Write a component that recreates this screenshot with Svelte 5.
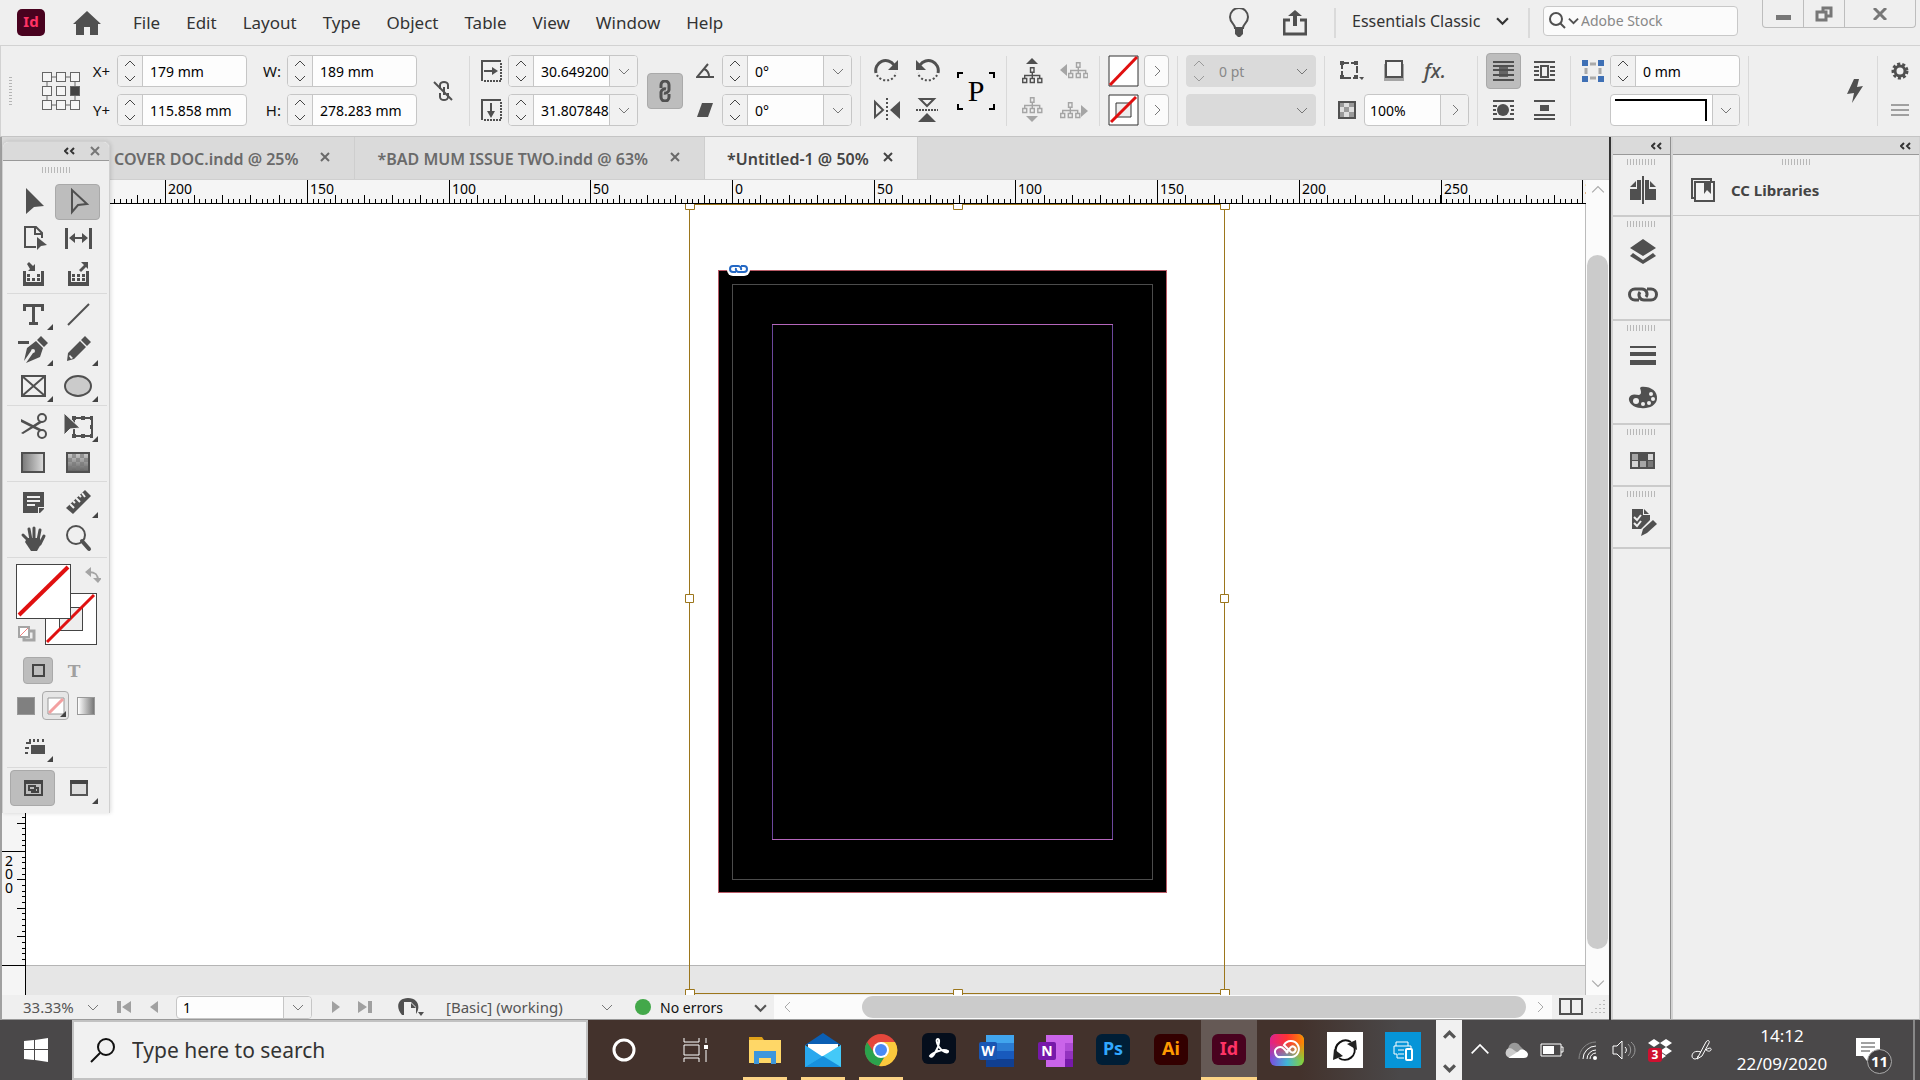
<script lang="ts">
	type Tool = { name: string; art: string; more?: boolean; active?: boolean };

	const menus = ['File', 'Edit', 'Layout', 'Type', 'Object', 'Table', 'View', 'Window', 'Help'];

	const tabs = [
		{ name: 'COVER DOC.indd @ 25%', active: false },
		{ name: '*BAD MUM ISSUE TWO.indd @ 63%', active: false },
		{ name: '*Untitled-1 @ 50%', active: true }
	];

	const ink = '#505050';

	const toolGroups: Tool[][] = [
		[
			{ name: 'Selection', art: `<path d="M8 1v26l8-7 10-1z" fill="${ink}"/>` },
			{
				name: 'Direct selection',
				active: true,
				art: `<path d="M9 3v22l6-7 9-1z" fill="none" stroke="${ink}" stroke-width="2"/>`
			},
			{
				name: 'Page',
				art: `<path d="M18 24H7V4h11l6 6v5M17 4v7h7" fill="none" stroke="${ink}" stroke-width="2"/><path d="M19 14v13l4-4 6-1z" fill="${ink}"/>`
			},
			{
				name: 'Gap',
				art: `<path d="M2 5h3v21H2zM26 5h3v21h-3zM6 15l6-5v4h7v-4l6 5-6 5v-4h-7v4z" fill="${ink}"/>`
			},
			{
				name: 'Content collector',
				art: `<path d="M5 12h3v11h15V12h3v15H5zM9 15h3v3H9zM19 15h3v3h-3zM9 19h3v3H9zM14 19h3v3h-3zM19 19h3v3h-3zM9 5l2-2 4 4 2-2v7h-7l2-2z" fill="${ink}"/>`
			},
			{
				name: 'Content placer',
				art: `<path d="M5 12h3v11h15V12h3v15H5zM9 15h3v3H9zM14 15h3v3h-3zM19 15h3v3h-3zM9 19h3v3H9zM14 19h3v3h-3zM19 19h3v3h-3zM18 3h7v7l-2-2-5 5-2-2 5-5z" fill="${ink}"/>`
			}
		],
		[
			{
				name: 'Type',
				more: true,
				art: `<path d="M5 5h21v7h-3V8h-6v15h3v3h-9v-3h3V8H8v4H5z" fill="${ink}"/>`
			},
			{ name: 'Line', art: `<path d="M5 26L26 5" stroke="${ink}" stroke-width="2"/>` },
			{
				name: 'Delete anchor point',
				more: true,
				art: `<path d="M0 6h11v3H0zM23 1l7 7-4 4-7-7zM18 6l7 7-3 9-14 6 7-10a2 2 0 1 0-2-2L6 26l3-13z" fill="${ink}"/>`
			},
			{
				name: 'Pencil',
				more: true,
				art: `<path d="M22 1l6 6-4 4-6-6zM17 6l6 6L11 24l-7 2 1-8zM6 21l2 3 2-1-3-3z" fill-rule="evenodd" fill="${ink}"/>`
			},
			{
				name: 'Rectangle frame',
				more: true,
				art: `<path d="M4 5h23v20H4zM4 5l23 20M27 5L4 25" fill="none" stroke="${ink}" stroke-width="2"/>`
			},
			{
				name: 'Ellipse',
				more: true,
				art: `<ellipse cx="15" cy="15" rx="13" ry="10" fill="#cbcbcb" stroke="${ink}" stroke-width="2"/>`
			}
		],
		[
			{
				name: 'Scissors',
				art: `<path d="M3 8l22 11-2 2L3 11zM3 22L23 9l2 2L5 23z" fill="${ink}"/><circle cx="24" cy="7" r="4" fill="#efefef" stroke="${ink}" stroke-width="2"/><circle cx="24" cy="23" r="4" fill="#efefef" stroke="${ink}" stroke-width="2"/>`
			},
			{
				name: 'Free transform',
				more: true,
				art: `<path d="M11 7h18v18H11z" fill="none" stroke="${ink}" stroke-width="2"/><path d="M9 5h4v4H9zM18 5h4v4h-4zM27 5h4v4h-4zM27 14h4v4h-4zM27 23h4v4h-4zM18 23h4v4h-4zM9 23h4v4H9z" fill="${ink}"/><path d="M1 2v22l6-6 10-1z" fill="${ink}" stroke="#efefef"/>`
			},
			{
				name: 'Gradient swatch',
				art: `<defs><linearGradient id="gs"><stop stop-color="#777"/><stop offset="1" stop-color="#ddd"/></linearGradient></defs><path d="M4 6h22v19H4z" fill="url(#gs)" stroke="${ink}" stroke-width="2"/>`
			},
			{
				name: 'Gradient feather',
				art: `<defs><linearGradient id="gf" x2="0" y2="1"><stop stop-color="#ccc"/><stop offset="1" stop-color="#606060"/></linearGradient></defs><path d="M4 6h22v19H4z" fill="url(#gf)" stroke="${ink}" stroke-width="2"/><path d="M9 7h4v4H9zM17 7h4v4h-4zM5 11h4v4H5zM13 11h4v4h-4zM21 11h4v4h-4zM9 15h4v4H9zM17 15h4v4h-4zM5 19h4v4H5zM13 19h4v4h-4zM21 19h4v4h-4z" fill="#777" opacity=".6"/>`
			}
		],
		[
			{
				name: 'Note',
				art: `<path d="M5 5h21v15h-6v6H5z" fill="${ink}"/><path d="M26 21v1l-4 4h-1v-5z" fill="${ink}"/><path d="M9 10h13M9 14h13M9 18h8" stroke="#efefef" stroke-width="2"/>`
			},
			{
				name: 'Measure',
				more: true,
				art: `<path d="M22 3l6 6L10 27l-7-6z" fill="${ink}"/><path d="M7 17l4 4M10 14l2 2M13 11l4 4M16 8l2 2M19 6l3 4" stroke="#efefef" stroke-width="2"/>`
			},
			{
				name: 'Hand',
				art: `<path d="M5 12l6 6M11 6l2 11M16 5v11M22 7l-2 10M26 13l-4 8" stroke="${ink}" stroke-width="3" stroke-linecap="round"/><path d="M9 15h13l1 6-4 7h-6l-6-9z" fill="${ink}"/>`
			},
			{
				name: 'Zoom',
				art: `<circle cx="13" cy="12" r="9" fill="none" stroke="${ink}" stroke-width="2"/><path d="M19 18l7 8" stroke="${ink}" stroke-width="4" stroke-linecap="round"/>`
			}
		]
	];

	const panelGroups = [
		{
			icons: [
				{
					name: 'Pages',
					art: `<path d="M13 5v20H2V14h7V5zM17 5v20h11V14h-7V5z" fill="${ink}"/><path d="M2 12l6-6v6zM28 12l-6-6v6z" fill="${ink}"/><path d="M15 1v28" stroke="${ink}" stroke-width="2"/>`
				}
			]
		},
		{
			icons: [
				{
					name: 'Layers',
					art: `<path d="M15 2l13 9-13 8-13-8zM5 16l10 7 10-7 3 3-13 8-13-8z" fill="${ink}"/>`
				},
				{
					name: 'Links',
					art: `<path d="M11 21H7a5 5 0 0 1 0-11h7a5 5 0 0 1 4 8M19 10h4a5 5 0 0 1 0 11h-7a5 5 0 0 1-4-8" fill="none" stroke="${ink}" stroke-width="3"/>`
				}
			]
		},
		{
			icons: [
				{ name: 'Stroke', art: `<path d="M2 5h26v2H2zM2 11h26v4H2zM2 19h26v5H2z" fill="${ink}"/>` },
				{
					name: 'Color',
					art: `<path d="M13 4c9-1 17 4 16 12-1 7-9 10-16 9C5 25 0 19 1 15c2-5 7-3 10-3 3-1 2-4 1-7z" fill="${ink}"/><g fill="#efefef"><circle cx="8" cy="18" r="3"/><circle cx="15" cy="21" r="2"/><circle cx="21" cy="20" r="2"/><circle cx="25" cy="16" r="2"/><circle cx="23" cy="11" r="2"/></g>`
				}
			]
		},
		{
			icons: [
				{
					name: 'Swatches',
					art: `<path d="M2 7h25v17H2z" fill="${ink}"/><path d="M4 9h6v6H4zM12 16h6v6h-6z" fill="#a5a5a5"/><path d="M20 9h5v6h-5zM4 16h6v6H4z" fill="#d5d5d5"/><path d="M20 16h5v6h-5z" fill="#777"/>`
				}
			]
		},
		{
			icons: [
				{
					name: 'Scripts',
					art: `<path d="M4 2h11v6h7v5l-9 9H4z" fill="${ink}"/><path d="M16 2l5 5h-5z" fill="${ink}"/><path d="M6 10l3 3 4-5M6 16l3 3 4-5" fill="none" stroke="#efefef" stroke-width="2"/><path d="M25 13l4 4-10 9-6 3 2-7z" fill="${ink}"/>`
				}
			]
		}
	];

	const apps = [
		{
			name: 'File Explorer',
			open: true,
			art: `<path d="M2 5h13l2 3h17v6H2z" fill="#e0a21a"/><path d="M2 8h32v23H2z" fill="#ffd767"/><path d="M7 19h22v13h-5v-6H12v6H7z" fill="#3d97dd"/>`
		},
		{
			name: 'Mail',
			open: true,
			art: `<path d="M18 1l18 12H0z" fill="#0a5fb4"/><path d="M3 12h30v14H3z" fill="#fff"/><path d="M0 13l18 12L36 13v22H0z" fill="#29a8ee"/><path d="M36 13L0 35h36z" fill="#44c9f8"/><path d="M18 24l18 11H0z" fill="#1790dd"/>`
		},
		{
			name: 'Chrome',
			open: true,
			art: `<circle cx="18" cy="18" r="16" fill="#e4473c"/><path d="M4 10a16 16 0 0 0 12 24l8-13-12 1z" fill="#2ba24c"/><path d="M16 34a16 16 0 0 0 16-24H18l6 11z" fill="#fbc93d"/><circle cx="18" cy="18" r="8" fill="#fff"/><circle cx="18" cy="18" r="6" fill="#4a8af4"/>`
		},
		{
			name: 'Acrobat',
			art: `<rect x="1" y="1" width="34" height="31" rx="6" fill="#050e1c"/><path d="M9 24c2-3 13-8 18-5 1 3-6 1-9-4s-3-8-1-8 1 6-1 10-5 10-7 7z" fill="none" stroke="#fff" stroke-width="2"/>`
		},
		{
			name: 'Word',
			art: `<path d="M7 3h28v8H7z" fill="#41a5ee"/><path d="M7 11h28v8H7z" fill="#2b7cd3"/><path d="M7 19h28v8H7z" fill="#185abd"/><path d="M7 27h28v8H7z" fill="#103f91"/><rect y="10" width="18" height="18" rx="2" fill="#1956b3"/><text x="9" y="24" text-anchor="middle" font-size="14" font-weight="700" fill="#fff">W</text>`
		},
		{
			name: 'OneNote',
			art: `<path d="M9 3h27v32H9z" fill="#ca64ea"/><path d="M28 11h8v8h-8z" fill="#ae4bd5"/><path d="M28 19h8v8h-8z" fill="#9332bf"/><path d="M28 27h8v8h-8z" fill="#7719aa"/><rect x="1" y="10" width="18" height="18" rx="2" fill="#7719aa"/><text x="10" y="24" text-anchor="middle" font-size="14" font-weight="700" fill="#fff">N</text>`
		},
		{
			name: 'Photoshop',
			art: `<rect x="1" y="2" width="34" height="31" rx="6" fill="#001e36"/><text x="18" y="23" text-anchor="middle" font-size="18" font-weight="700" fill="#31a8ff">Ps</text>`
		},
		{
			name: 'Illustrator',
			art: `<rect x="1" y="2" width="34" height="31" rx="6" fill="#330000"/><text x="18" y="23" text-anchor="middle" font-size="18" font-weight="700" fill="#ff9a00">Ai</text>`
		},
		{
			name: 'InDesign',
			open: true,
			active: true,
			art: `<rect x="1" y="2" width="34" height="31" rx="6" fill="#49021f"/><text x="18" y="23" text-anchor="middle" font-size="18" font-weight="700" fill="#ff3366">Id</text>`
		},
		{
			name: 'Creative Cloud',
			art: `<defs><linearGradient id="cc1"><stop stop-color="#e0218a"/><stop offset=".5" stop-color="#f33"/><stop offset="1" stop-color="#fb8c00"/></linearGradient><linearGradient id="cc2"><stop stop-color="#7b4be0"/><stop offset=".5" stop-color="#3fb6d8"/><stop offset="1" stop-color="#8bd12f"/></linearGradient><linearGradient id="cc3" x2="0" y2="1"><stop offset=".3" stop-color="#fff"/><stop offset=".8" stop-color="#000"/></linearGradient><mask id="ccm"><path d="M0 0h36v36H0z" fill="url(#cc3)"/></mask></defs><rect x="1" y="2" width="34" height="32" rx="6" fill="url(#cc2)"/><rect x="1" y="2" width="34" height="32" rx="6" fill="url(#cc1)" mask="url(#ccm)"/><path d="M19 21l-4-4a5 5 0 1 0-3 8h11a8 8 0 1 0-8-12l7 7a3 3 0 1 0 0-5l-5 6" fill="none" stroke="#fff" stroke-width="2"/>`
		},
		{
			name: 'Sync',
			art: `<path d="M0 0h36v36H0z" fill="#fff"/><path d="M9 21a10 10 0 0 1 15-11M27 14a10 10 0 0 1-15 12" fill="none" stroke="#111" stroke-width="2"/><path d="M20 12l9-4 1 10zM16 24l-10 4 1-11z" fill="#222"/>`
		},
		{
			name: 'Print and Scan',
			art: `<path d="M0 0h36v36H0z" fill="#0695d8"/><path d="M11 14v-4h12v4M19 26h-7v-4H9v-8h17v3M13 18h6M13 22h6" fill="none" stroke="#fff" stroke-width="1"/><rect x="21" y="17" width="6" height="11" rx="1" fill="#0695d8" stroke="#fff" stroke-width="2"/>`
		}
	];

	// Rulers: 50 mm is a little under 142 px on screen
	const step = 141.7;
	const zeroX = 730;
	const majors = [-5, -4, -3, -2, -1, 0, 1, 2, 3, 4, 5, 6];

	function ticks(from: number, to: number, every: number) {
		const out: number[] = [];
		for (let n = from; n <= to; n++) out.push(Math.round(n * every));
		return out;
	}

	const minorX = ticks(-130, 150, step / 25);
	const mediumX = ticks(-25, 30, step / 5);
	const minorY = ticks(-114, 20, 5.68);
	const mediumY = ticks(-22, 4, 28.4);

	const refPoints = [0, 1, 2].flatMap((row) => [0, 1, 2].map((col) => ({ row, col })));
	const dots = [0, 1, 2, 3].flatMap((row) => [0, 1, 2, 3].filter((c) => c + row > 2).map((col) => ({ row, col })));
</script>

{#snippet chevron(dir: string, size: number = 12, color: string = '#777', weight: number = 1)}
	<svg class="chev {dir}" width={size} height={size} viewBox="0 0 12 12" aria-hidden="true">
		<path d="M1 4l5 5 5-5" fill="none" stroke={color} stroke-width={weight} />
	</svg>
{/snippet}

{#snippet collapse()}
	<svg width="11" height="8" viewBox="0 0 11 8" aria-hidden="true">
		<path d="M4 1L1 4l3 3M10 1L7 4l3 3" fill="none" stroke="#333" stroke-width="2" />
	</svg>
{/snippet}

{#snippet field(label: string, value: string, drop: boolean = false, disabled: boolean = false)}
	<div class="field" class:disabled>
		<div class="spin">
			<button aria-label="Increase {label}" {disabled}>{@render chevron('up', 12, disabled ? '#999' : '#444')}</button>
			<button aria-label="Decrease {label}" {disabled}>{@render chevron('down', 12, disabled ? '#999' : '#444')}</button>
		</div>
		<input aria-label={label} {value} {disabled} />
		{#if drop}
			<button class="drop" aria-label="{label} presets" {disabled}>{@render chevron('down')}</button>
		{/if}
	</div>
{/snippet}

{#snippet grip()}
	<div class="grip"></div>
{/snippet}

{#snippet tree(dim: boolean)}
	<g fill="none" stroke={dim ? '#a5a5a5' : ink} stroke-width="1.4">
		<path d="M8.500 0.700h3.500v4.600H8.500zM0.700 11.500h4v4h-4zM8.300 11.500h4v4h-4zM15.800 11.500h4v4h-4zM10.300 5.500v6M2.700 11.500V8.500h15v3" />
	</g>
{/snippet}

<div class="screen">
	<header class="menubar">
		<svg class="logo" width="28" height="28" viewBox="0 0 28 28" aria-hidden="true">
			<rect width="28" height="27" rx="5" fill="#49021f" />
			<text x="14" y="18" text-anchor="middle" font-size="15" font-weight="700" fill="#ff3366">Id</text>
		</svg>
		<button class="home" aria-label="Home">
			<svg width="28" height="24" viewBox="0 0 28 24"><path d="M14 0l14 13h-3v11h-8v-8h-6v8H3V13H0z" fill={ink} /></svg>
		</button>
		<nav>
			{#each menus as menu}
				<button>{menu}</button>
			{/each}
		</nav>
		<div class="menu-right">
			<button class="bulb" aria-label="Learn">
				<svg width="20" height="30" viewBox="0 0 20 30">
					<path d="M6 20c0-4-5-5-5-11a9 9 0 0 1 18 0c0 6-5 7-5 11z" fill="none" stroke={ink} stroke-width="2" />
					<path d="M6 20h8v6l-3 3H9l-3-3z" fill={ink} />
				</svg>
			</button>
			<button class="share" aria-label="Share">
				<svg width="24" height="26" viewBox="0 0 24 26">
					<path d="M7 10H1v14h22V10h-6" fill="none" stroke={ink} stroke-width="3" />
					<path d="M12 0l7 6h-5v10h-4V6H5z" fill={ink} />
				</svg>
			</button>
			<i class="bar"></i>
			<label class="workspace">
				<select aria-label="Workspace"><option>Essentials Classic</option></select>
				{@render chevron('down', 13, '#333', 2)}
			</label>
			<i class="bar"></i>
			<label class="stock">
				<svg width="17" height="17" viewBox="0 0 17 17">
					<circle cx="7" cy="7" r="6" fill="none" stroke={ink} stroke-width="2" />
					<path d="M11 11l5 5" stroke={ink} stroke-width="2" />
				</svg>
				{@render chevron('down', 11, ink, 2)}
				<input type="search" placeholder="Adobe Stock" aria-label="Adobe Stock" />
			</label>
			<div class="window-buttons">
				<button aria-label="Minimize"><svg width="15" height="5"><path d="M0 0h15v5H0z" fill="#777" /></svg></button>
				<button aria-label="Restore">
					<svg width="18" height="16" viewBox="0 0 18 16"><path d="M2 6h9v8H2zM8 6V2h8v8h-5" fill="none" stroke="#777" stroke-width="3" /></svg>
				</button>
				<button aria-label="Close">
					<svg width="14" height="12" viewBox="0 0 14 12"><path d="M1 0l12 12M13 0L1 12" stroke="#777" stroke-width="3" /></svg>
				</button>
			</div>
		</div>
	</header>

	<section class="controls" aria-label="Control">
		<div class="vgrip"></div>
		<svg class="refpoint" width="38" height="38" viewBox="0 0 38 38" role="img" aria-label="Reference point">
			<path d="M5 5h28v28H5z" fill="none" stroke="#666" />
			{#each refPoints as p}
				<rect
					x={p.col * 14 + 0.5}
					y={p.row * 14 + 0.5}
					width="9"
					height="9"
					fill={p.row === 1 && p.col === 2 ? '#444' : '#f5f5f5'}
					stroke="#666"
				/>
			{/each}
		</svg>
		<div class="stack labels"><span>X+</span><span>Y+</span></div>
		<div class="stack">
			{@render field('X', '179 mm')}
			{@render field('Y', '115.858 mm')}
		</div>
		<div class="stack labels size-labels"><span>W:</span><span>H:</span></div>
		<div class="stack">
			{@render field('Width', '189 mm')}
			{@render field('Height', '278.283 mm')}
		</div>
		<button class="unlink" aria-label="Constrain proportions">
			<svg width="20" height="22" viewBox="0 0 20 22">
				<path d="M7 9V5a4 3 0 0 1 8 0v4M7 13v4a4 3 0 0 0 8 0v-4M11 7v8" fill="none" stroke={ink} stroke-width="2" />
				<path d="M1 2l18 18" stroke={ink} stroke-width="2" />
			</svg>
		</button>
		<i class="sep"></i>
		<div class="stack scale-icons">
			<svg width="21" height="22" viewBox="0 0 21 22">
				<path d="M20 1H1v20" fill="none" stroke={ink} stroke-width="2" />
				<path d="M20 3v18H2" fill="none" stroke={ink} stroke-width="2" stroke-dasharray="2 1" />
				<path d="M3 10h8V7l6 4-6 4v-3H3z" fill={ink} />
			</svg>
			<svg width="21" height="22" viewBox="0 0 21 22">
				<path d="M20 1H1v20" fill="none" stroke={ink} stroke-width="2" />
				<path d="M20 3v18H2" fill="none" stroke={ink} stroke-width="2" stroke-dasharray="2 1" />
				<path d="M9 4v8H6l4 7 4-7h-3V4z" fill={ink} />
			</svg>
		</div>
		<div class="stack">
			{@render field('Scale X', '30.649200', true)}
			{@render field('Scale Y', '31.807848', true)}
		</div>
		<button class="link-toggle" aria-label="Constrain scaling" aria-pressed="true">
			<svg width="12" height="22" viewBox="0 0 12 22">
				<path d="M2 8V5a4 4 0 0 1 8 0v5a4 4 0 0 1-5 3M10 14v3a4 4 0 0 1-8 0v-5a4 4 0 0 1 5-3" fill="none" stroke={ink} stroke-width="3" />
			</svg>
		</button>
		<div class="stack angle-icons">
			<svg width="18" height="16" viewBox="0 0 18 16">
				<path d="M12 1L1 14h17M8 6c3 1 5 4 5 8" fill="none" stroke={ink} stroke-width="2" />
			</svg>
			<svg width="18" height="16" viewBox="0 0 18 16"><path d="M6 1h11l-5 14H1z" fill={ink} /></svg>
		</div>
		<div class="stack">
			{@render field('Rotation', '0°', true)}
			{@render field('Shear', '0°', true)}
		</div>
		<i class="sep"></i>
		<div class="pairs rotate">
			<button aria-label="Rotate clockwise">
				<svg width="26" height="26" viewBox="0 0 26 26">
					<path d="M2 15A10 10 0 0 1 20 7" fill="none" stroke={ink} stroke-width="3" />
					<path d="M24 2v10H14z" fill={ink} />
					<path d="M3 17a10 9 0 0 0 19-2" fill="none" stroke={ink} stroke-width="2" stroke-dasharray="2 2" />
				</svg>
			</button>
			<button aria-label="Rotate counterclockwise">
				<svg width="26" height="26" viewBox="0 0 26 26">
					<path d="M24 15A10 10 0 0 0 6 7" fill="none" stroke={ink} stroke-width="3" />
					<path d="M2 2v10h10z" fill={ink} />
					<path d="M23 17a10 9 0 0 1-19-2" fill="none" stroke={ink} stroke-width="2" stroke-dasharray="2 2" />
				</svg>
			</button>
			<button aria-label="Flip horizontal">
				<svg width="26" height="26" viewBox="0 0 26 26">
					<path d="M1 5v15l8-7z" fill="none" stroke={ink} stroke-width="2" />
					<path d="M13 1v24" stroke={ink} stroke-width="2" stroke-dasharray="2 2" />
					<path d="M26 4v18l-10-9z" fill={ink} />
				</svg>
			</button>
			<button aria-label="Flip vertical">
				<svg width="26" height="26" viewBox="0 0 26 26">
					<path d="M6 2h14l-7 7z" fill="none" stroke={ink} stroke-width="2" />
					<path d="M2 13h22" stroke={ink} stroke-width="2" stroke-dasharray="2 1" />
					<path d="M13 16l9 9H4z" fill={ink} />
				</svg>
			</button>
		</div>
		<svg class="p-box" width="38" height="38" viewBox="0 0 38 38" role="img" aria-label="Rotation and flip state">
			<path d="M1 6V1h5M32 1h5v5M1 32v5h5M32 37h5v-5" fill="none" stroke="#000" stroke-width="2" />
			<text x="19" y="29" text-anchor="middle" font-family="Liberation Serif, serif" font-size="30">P</text>
		</svg>
		<i class="sep wide"></i>
		<div class="pairs trees">
			<button aria-label="Select container">
				<svg width="21" height="26" viewBox="0 0 21 26"><path d="M10 0l6 6H4z" fill={ink} /><g transform="translate(0 9)">{@render tree(false)}</g></svg>
			</button>
			<button aria-label="Select previous object" disabled>
				<svg width="28" height="26" viewBox="0 0 28 26"><path d="M7 6v12L0 12z" fill="#a5a5a5" /><g transform="translate(8 4)">{@render tree(true)}</g></svg>
			</button>
			<button aria-label="Select content" disabled>
				<svg width="21" height="26" viewBox="0 0 21 26"><path d="M4 19h12l-6 6z" fill="#a5a5a5" />{@render tree(true)}</svg>
			</button>
			<button aria-label="Select next object" disabled>
				<svg width="28" height="26" viewBox="0 0 28 26"><path d="M21 8v12l7-6z" fill="#a5a5a5" /><g transform="translate(0 5)">{@render tree(true)}</g></svg>
			</button>
		</div>
		<i class="sep wide"></i>
		<div class="pairs paint">
			<button aria-label="Fill" class="chip">
				<svg width="31" height="32" viewBox="0 0 31 32"><path d="M1 1h29v30H1z" fill="#fff" stroke="#333" /><path d="M2 30L29 2" stroke="#e01010" stroke-width="3" /></svg>
			</button>
			<button class="more" aria-label="Fill options">{@render chevron('right')}</button>
			<button aria-label="Stroke" class="chip">
				<svg width="31" height="32" viewBox="0 0 31 32"><path d="M1 1h29v30H1z" fill="#fff" stroke="#333" /><path d="M8 9h15v14H8z" fill="#eee" stroke="#333" /><path d="M3 28L28 3" stroke="#e01010" stroke-width="3" /></svg>
			</button>
			<button class="more" aria-label="Stroke options">{@render chevron('right')}</button>
		</div>
		<i class="sep"></i>
		<div class="stack">
			{@render field('Stroke weight', '0 pt', true, true)}
			<div class="field disabled">
				<input aria-label="Stroke type" disabled />
				<button class="drop" aria-label="Stroke types" disabled>{@render chevron('down')}</button>
			</div>
		</div>
		<i class="sep"></i>
		<div class="stack effects">
			<div class="effect-icons">
				<button aria-label="Corner options">
					<svg width="24" height="20" viewBox="0 0 24 20">
						<path d="M2 2h15v15H2z" fill="none" stroke={ink} stroke-width="2" stroke-dasharray="7 2" />
						<path d="M0 0h4v4H0zM14 0h4v4h-4zM0 14h4v4H0zM14 14h4v4h-4zM19 16h5l-2 3z" fill={ink} />
					</svg>
				</button>
				<button aria-label="Drop shadow">
					<svg width="20" height="22" viewBox="0 0 20 22"><path d="M0 4h20v17H0z" fill="#a5a5a5" /><path d="M2 1h16v16H2z" fill="#f3f3f3" stroke={ink} stroke-width="2" /></svg>
				</button>
				<button class="fx" aria-label="Effects">fx<span>.</span></button>
			</div>
			<div class="opacity">
				<svg width="18" height="18" viewBox="0 0 18 18">
					<path d="M1 1h16v16H1z" fill="#ddd" stroke={ink} stroke-width="2" />
					<path d="M2 2h4v4H2zM11 2h5v4h-5zM6 6h5v5H6zM2 11h4v5H2zM11 11h5v5h-5z" fill="#999" />
				</svg>
				<div class="field">
					<input aria-label="Opacity" value="100%" />
					<button class="drop" aria-label="Opacity slider">{@render chevron('right')}</button>
				</div>
			</div>
		</div>
		<i class="sep"></i>
		<div class="pairs wrap">
			<button class="on" aria-label="No text wrap" aria-pressed="true">
				<svg width="21" height="20" viewBox="0 0 21 20"><path d="M0 1h21M0 5h21M0 9h21M0 14h21M0 19h21" stroke={ink} stroke-width="2" /><path d="M6 4h9v12H6z" fill={ink} opacity=".8" /></svg>
			</button>
			<button aria-label="Wrap around bounding box">
				<svg width="21" height="20" viewBox="0 0 21 20"><path d="M0 1h21M0 6h5M16 6h5M0 10h5M16 10h5M0 14h5M16 14h5M0 19h21" stroke={ink} stroke-width="2" /><path d="M7 5h7v11H7z" fill="none" stroke={ink} stroke-width="2" /></svg>
			</button>
			<button aria-label="Wrap around object shape">
				<svg width="21" height="20" viewBox="0 0 21 20"><path d="M0 1h21M0 6h4M17 6h4M0 10h3M18 10h3M0 14h4M17 14h4M0 19h21" stroke={ink} stroke-width="2" /><circle cx="10" cy="10" r="6" fill={ink} /></svg>
			</button>
			<button aria-label="Jump object">
				<svg width="21" height="20" viewBox="0 0 21 20"><path d="M0 1h21M0 15h21M0 19h21" stroke={ink} stroke-width="2" /><path d="M6 5h9v6H6z" fill={ink} /></svg>
			</button>
		</div>
		<i class="sep"></i>
		<div class="stack corner-icon">
			<svg width="22" height="22" viewBox="0 0 22 22">
				<path d="M0 0h6v6H0zM16 0h6v6h-6zM0 16h6v6H0zM16 16h6v6h-6z" fill="#3f70b5" />
				<path d="M8 4h6M8 18h6M4 8v6M18 8v6" stroke="#aaa" stroke-width="3" />
			</svg>
		</div>
		<div class="stack">
			{@render field('Corner size', '0 mm')}
			<div class="field corner">
				<svg width="101" height="30" viewBox="0 0 101 30" role="img" aria-label="Corner shape"><path d="M4 5h91v21" fill="none" stroke="#000" stroke-width="2" /></svg>
				<button class="drop" aria-label="Corner shapes">{@render chevron('down')}</button>
			</div>
		</div>
		<i class="sep"></i>
		<button class="bolt" aria-label="Quick apply">
			<svg width="16" height="24" viewBox="0 0 16 24"><path d="M7 0h5l-2 8 6-1L5 24l2-10-7 1z" fill={ink} /></svg>
		</button>
		<i class="sep last"></i>
		<div class="stack bar-menu">
			<button aria-label="Customize">
				<svg width="18" height="18" viewBox="0 0 18 18">
					<circle cx="9" cy="9" r="5" fill="none" stroke={ink} stroke-width="3" />
					<circle cx="9" cy="9" r="7" fill="none" stroke={ink} stroke-width="3" stroke-dasharray="3 2" />
				</svg>
			</button>
			<button aria-label="Control menu">
				<svg width="18" height="12" viewBox="0 0 18 12"><path d="M0 1h18M0 6h18M0 11h18" stroke={ink} stroke-width="1" /></svg>
			</button>
		</div>
	</section>

	<main>
		<div class="document">
			<div class="tabs" role="tablist">
				{#each tabs as tab}
					<div class="tab" class:active={tab.active}>
						<button role="tab" aria-selected={tab.active}>{tab.name}</button>
						<button class="close" aria-label="Close {tab.name}">
							<svg width="10" height="10" viewBox="0 0 10 10"><path d="M1 1l8 8M9 1L1 9" stroke="currentColor" stroke-width="2" /></svg>
						</button>
					</div>
				{/each}
			</div>
			<div class="view">
				<div class="sheet">
					<svg class="ruler-h" aria-hidden="true">
						<g transform="translate({zeroX} 0)">
							{#each minorX as x}<rect {x} y="19" width="1" height="4" />{/each}
							{#each mediumX as x}<rect {x} y="15" width="1" height="8" />{/each}
							{#each majors as m}
								<rect x={Math.round(m * step)} y="0" width="1" height="23" />
								<text x={Math.round(m * step) + 3} y="14">{Math.abs(m * 50)}</text>
							{/each}
						</g>
						<rect y="23" width="100%" height="1" />
					</svg>
					<div class="lower">
						<svg class="ruler-v" aria-hidden="true">
							<g transform="translate(0 647)">
								{#each minorY as y}<rect x="20" {y} width="4" height="1" />{/each}
								{#each mediumY as y}<rect x="15" {y} width="8" height="1" />{/each}
								<rect y="0" width="24" height="1" />
								<rect y="114" width="24" height="1" />
								<text><tspan x="3" y="15">2</tspan><tspan x="3" y="28">0</tspan><tspan x="3" y="42">0</tspan></text>
							</g>
							<rect x="23" width="1" height="100%" />
						</svg>
						<svg class="canvas" role="img" aria-label="Page on pasteboard">
							<rect width="100%" height="761" fill="#fff" />
							<rect y="761" width="100%" height="1" fill="#b5b5b5" />
							<rect x="692.5" y="66.5" width="448" height="622" fill="#000" stroke="#b95a66" />
							<rect x="706.5" y="80.5" width="420" height="595" fill="none" stroke="#4c4c4c" />
							<rect x="746.5" y="120.5" width="340" height="515" fill="none" stroke="#6c479c" />
							<path d="M746 120.500h341M746 635.500h341" stroke="#b466bb" />
							<g transform="translate(701 59)">
								<rect width="23" height="13" rx="6" fill="#fff" />
								<path d="M9 9H6a3 3 0 0 1 0-6h5a3 3 0 0 1 3 4M14 3h3a3 3 0 0 1 0 6h-5a3 3 0 0 1-3-4" fill="none" stroke="#2468c4" stroke-width="2" />
							</g>
							<g fill="none" stroke="#9c761c">
								<rect x="663.5" y="0.5" width="535" height="789" />
								<g fill="#fff">
									<path d="M659.500 0v5.500h9V0M927.500 0v5.500h9V0M1194.500 0v5.500h9V0" />
									<path d="M659.500 390.500h8v8h-8zM1194.500 390.500h8v8h-8z" />
									<path d="M659.500 791v-5.500h9v5.500M927.500 791v-5.500h9v5.500M1194.500 791v-5.500h9v5.500" />
								</g>
							</g>
						</svg>
					</div>
				</div>
				<div class="vscroll">
					{@render chevron('up', 14, '#aaa')}
					<div class="thumb"></div>
					{@render chevron('down', 14, '#aaa')}
				</div>
			</div>

			<footer class="status">
				<label class="zoom-level">
					<select aria-label="Zoom level"><option>33.33%</option></select>
					{@render chevron('down')}
				</label>
				<button class="first" aria-label="First page"><svg width="14" height="12"><path d="M0 0h4v12H0zM14 0v12L5 6z" fill="#a0a0a0" /></svg></button>
				<button class="prev" aria-label="Previous page"><svg width="8" height="12"><path d="M8 0v12L0 6z" fill="#a0a0a0" /></svg></button>
				<div class="field page">
					<input aria-label="Page" value="1" />
					<button class="drop" aria-label="Pages">{@render chevron('down')}</button>
				</div>
				<button class="next" aria-label="Next page"><svg width="8" height="12"><path d="M0 0v12l8-6z" fill="#a0a0a0" /></svg></button>
				<button class="end" aria-label="Last page"><svg width="14" height="12"><path d="M10 0h4v12h-4zM0 0v12l9-6z" fill="#a0a0a0" /></svg></button>
				<button class="open-doc" aria-label="Open">
					<svg width="27" height="20" viewBox="0 0 27 20">
						<path d="M5 18C-2 10 1 1 11 1s13 9 8 16v-7l-5-5H7v13z" fill={ink} />
						<path d="M9 7h4v5h4v4H9z" fill="none" stroke={ink} stroke-width="0" />
						<path d="M14 6l5 5h-5z" fill={ink} /><path d="M21 15h6l-3 4z" fill={ink} />
					</svg>
				</button>
				<label class="profile">
					<select aria-label="Preflight profile"><option>[Basic] (working)</option></select>
					{@render chevron('down')}
				</label>
				<button class="errors"><i></i>No errors{@render chevron('down', 13, '#555', 2)}</button>
				<div class="hscroll">
					{@render chevron('left', 12, '#aaa')}
					<div class="thumb"></div>
					{@render chevron('right', 12, '#aaa')}
				</div>
				<button class="split" aria-label="Split layout view"><svg width="24" height="18" viewBox="0 0 24 18"><path d="M1 1h22v15H1zM12 1v15" fill="none" stroke={ink} stroke-width="2" /></svg></button>
				<svg class="resize" width="15" height="14" viewBox="0 0 15 14" aria-hidden="true">
					{#each dots as d}<rect x={d.col * 4} y={d.row * 4} width="2" height="1" fill="#bbb" />{/each}
				</svg>
			</footer>
		</div>

		<aside class="dock">
			<div class="strip">
				<div class="cap"><button aria-label="Expand panels">{@render collapse()}</button></div>
				{#each panelGroups as group}
					<div class="panel-group">
						{@render grip()}
						{#each group.icons as icon}
							<button aria-label={icon.name}><svg width="30" height="30" viewBox="0 0 30 30">{@html icon.art}</svg></button>
						{/each}
					</div>
				{/each}
			</div>
			<div class="libraries">
				<div class="cap"><button aria-label="Collapse panel">{@render collapse()}</button></div>
				<div class="lib-head">
					{@render grip()}
					<button>
						<svg width="24" height="24" viewBox="0 0 24 24">
							<path d="M3 20H1V1h19v2" fill="none" stroke={ink} stroke-width="2" />
							<rect x="4" y="4" width="19" height="19" fill="#f3f3f3" stroke={ink} stroke-width="2" />
							<path d="M13 4h7v12l-4-4-3 4z" fill={ink} />
						</svg>
						CC Libraries
					</button>
				</div>
			</div>
		</aside>
	</main>

	<aside class="toolbox" aria-label="Tools">
		<div class="tool-cap">
			<button aria-label="Collapse tools">{@render collapse()}</button>
			<button aria-label="Close tools"><svg width="10" height="10" viewBox="0 0 10 10"><path d="M1 1l8 8M9 1L1 9" stroke="#777" stroke-width="2" /></svg></button>
		</div>
		{@render grip()}
		{#each toolGroups as group}
			<div class="tools">
				{#each group as tool}
					<button class:on={tool.active} class:corner-mark={tool.more} aria-label={tool.name}>
						<svg width="30" height="30" viewBox="0 0 30 30">{@html tool.art}</svg>
					</button>
				{/each}
			</div>
		{/each}
		<div class="colors">
			<svg width="86" height="82" viewBox="0 0 86 82" role="img" aria-label="Fill and stroke: none">
				<rect x="30.5" y="29.5" width="51" height="51" fill="#fff" stroke="#444" />
				<rect x="44.500" y="43.500" width="23" height="23" fill="#eee" stroke="#444" />
				<path d="M32 78l47-47" stroke="#e01010" stroke-width="3" />
				<rect x="1.500" y="0.500" width="54" height="54" fill="#fff" stroke="#444" />
				<path d="M4 51L53 3" stroke="#e01010" stroke-width="4" />
				<path d="M74 8c6 0 9 2 9 9" fill="none" stroke="#a5a5a5" stroke-width="2" />
				<path d="M76 3v10l-6-5zM78 14h9l-4 5z" fill="#a5a5a5" />
				<path d="M9 67h10v9h-10z" fill="none" stroke="#a5a5a5" stroke-width="3" />
				<path d="M4 63h10v10H4z" fill="#fff" stroke="#a5a5a5" stroke-width="2" />
				<path d="M5 72l8-8" stroke="#ee8080" />
			</svg>
		</div>
		<div class="format">
			<button class="on" aria-label="Formatting affects container"><svg width="13" height="13"><path d="M1 1h11v11H1z" fill="none" stroke="#444" stroke-width="2" /></svg></button>
			<button class="text-format" aria-label="Formatting affects text">T</button>
		</div>
		<div class="apply">
			<button aria-label="Apply color"><i class="solid"></i></button>
			<button class="framed corner-mark" aria-label="Apply none">
				<svg width="18" height="18"><path d="M1 1h16v16H1z" fill="#fff" stroke="#999" /><path d="M2 16L16 2" stroke="#f3a0a0" stroke-width="3" /></svg>
			</button>
			<button aria-label="Apply gradient"><i class="grad"></i></button>
		</div>
		<div class="tools view-tools">
			<button class="corner-mark" aria-label="View options">
				<svg width="30" height="30" viewBox="0 0 30 30"><path d="M13 14h14v9H13z" fill={ink} /><path d="M8 12h4V8M7 17h4M7 22h3M16 8v3M20 8v3M25 8v3" fill="none" stroke={ink} stroke-width="2" /></svg>
			</button>
		</div>
		<div class="tools mode-tools">
			<button class="on" aria-label="Normal view">
				<svg width="30" height="30" viewBox="0 0 30 30"><path d="M7 8h17v14H7z" fill="none" stroke="#444" stroke-width="2" /><path d="M6 7h19v4H6z" fill="#444" /><path d="M11 13h6v4h-6zM14 17v2h6v-4h-3" fill="none" stroke="#444" stroke-width="2" /></svg>
			</button>
			<button class="corner-mark" aria-label="Screen mode">
				<svg width="30" height="30" viewBox="0 0 30 30"><path d="M8 8h16v14H8z" fill="#ddd" stroke="#555" stroke-width="2" /><path d="M7 7h18v4H7z" fill="#444" /></svg>
			</button>
		</div>
	</aside>

	<footer class="taskbar">
		<button class="start" aria-label="Start">
			<svg width="24" height="24" viewBox="0 0 24 24"><path d="M0 3l10-1v9H0zM11 2l13-2v11H11zM0 12h10v10L0 21zM11 12h13v12l-13-2z" fill="#fff" /></svg>
		</button>
		<label class="search">
			<svg width="25" height="25" viewBox="0 0 25 25"><circle cx="16" cy="9" r="8" fill="none" stroke="#111" stroke-width="2" /><path d="M10 15L1 24" stroke="#111" stroke-width="2" /></svg>
			<input placeholder="Type here to search" aria-label="Type here to search" />
		</label>
		<button class="sys" aria-label="Cortana">
			<svg width="24" height="24"><circle cx="12" cy="12" r="10" fill="none" stroke="#fff" stroke-width="3" /></svg>
		</button>
		<button class="sys" aria-label="Task view">
			<svg width="26" height="24" viewBox="0 0 26 24"><path d="M1 0v4h15V0M1 7h15v10H1zM1 24v-4h15v4M23 0v5M23 12v12" fill="none" stroke="#fff" /><path d="M21 7h4v4h-4z" fill="#fff" /></svg>
		</button>
		<div class="apps">
			{#each apps as app}
				<button class:open={app.open} class:active={app.active} aria-label={app.name}>
					<svg width="36" height="36" viewBox="0 0 36 36">{@html app.art}</svg>
				</button>
			{/each}
		</div>
		<div class="overflow">
			<button aria-label="Scroll up">{@render chevron('up', 13, '#555', 3)}</button>
			<button aria-label="Scroll down">{@render chevron('down', 13, '#555', 3)}</button>
		</div>
		<div class="tray">
			<button aria-label="Show hidden icons">{@render chevron('up', 20, '#fff')}</button>
			<button aria-label="OneDrive">
				<svg width="24" height="16" viewBox="0 0 24 16"><path d="M5 10a6 6 0 0 1 11-6l4 4-12 7z" fill="#999" /><path d="M4 15a5 5 0 0 1 1-9c4 0 5 3 8 4l4 5z" fill="#ccc" /><path d="M4 16l11-7c2-3 8-1 9 3 0 3-2 4-4 4z" fill="#fff" /></svg>
			</button>
			<button aria-label="Battery">
				<svg width="24" height="14" viewBox="0 0 24 14"><path d="M1 1h20v12H1zM21 4h2v5h-2" fill="none" stroke="#fff" /><path d="M3 3h11v8H3z" fill="#fff" /></svg>
			</button>
			<button aria-label="Wi-Fi">
				<svg width="20" height="19" viewBox="0 0 20 19"><path d="M1 18A17 17 0 0 1 18 1" fill="none" stroke="#888" /><path d="M5 18A13 13 0 0 1 18 5M9 18a9 9 0 0 1 9-9M12 18a6 6 0 0 1 6-6" fill="none" stroke="#fff" /><circle cx="17" cy="17" r="2" fill="#fff" /></svg>
			</button>
			<button aria-label="Volume">
				<svg width="24" height="20" viewBox="0 0 24 20"><path d="M1 6h4l5-5v18l-5-5H1z" fill="none" stroke="#fff" /><path d="M13 7a4 4 0 0 1 0 6" fill="none" stroke="#fff" /><path d="M16 4a8 8 0 0 1 0 12M19 2a10 10 0 0 1 0 16" fill="none" stroke="#999" /></svg>
			</button>
			<button class="dropbox" aria-label="Dropbox, 3 notifications">
				<svg width="24" height="22" viewBox="0 0 24 22"><path d="M6 0l6 4-6 4-6-4zM18 0l6 4-6 4-6-4zM18 8l6 4-6 4-6-4zM12 13l6 4-6 4-6-4z" fill="#fff" /></svg>
				<b>3</b>
			</button>
			<button class="pen" aria-label="Windows Ink">
				<svg width="21" height="22" viewBox="0 0 21 22"><path d="M7 18L15 3c2-3 4-1 3 1l-7 13-5 3zM10 13c-6-2-9 1-9 4 0 4 6 4 6 0M15 11c3-3 6-2 5 0s-4 1-5 0" fill="none" stroke="#fff" /></svg>
			</button>
			<div class="clock"><span>14:12</span><span>22/09/2020</span></div>
			<button class="notices" aria-label="11 notifications">
				<svg width="24" height="24" viewBox="0 0 24 24"><path d="M0 0h24v18h-9l-4 5-4-5H0z" fill="#fff" /><path d="M5 5h14M5 9h14M5 13h9" stroke="#444" /></svg>
				<b>11</b>
			</button>
			<i class="peek"></i>
		</div>
	</footer>
</div>

<style>
	:global(body) {
		margin: 0;
		background: #efefef;
	}

	.screen {
		position: relative;
		display: flex;
		flex-direction: column;
		height: 100vh;
		overflow: hidden;
		background: #efefef;
		color: #333;
		font-family: 'Noto Sans', 'Open Sans', sans-serif;
		font-size: 14px;
	}

	.screen * {
		box-sizing: border-box;
	}

	button,
	input,
	select {
		margin: 0;
		padding: 0;
		border: 0;
		background: none;
		color: inherit;
		font: inherit;
		appearance: none;
		outline: 0;
	}

	button {
		display: flex;
		align-items: center;
		justify-content: center;
	}

	svg {
		display: block;
		flex: none;
	}

	.chev.up {
		transform: rotate(180deg);
	}

	.chev.left {
		transform: rotate(90deg);
	}

	.chev.right {
		transform: rotate(-90deg);
	}

	/* Menu bar */
	.menubar {
		display: flex;
		align-items: center;
		flex: none;
		height: 46px;
		padding-left: 17px;
		border-bottom: 1px solid #d2d2d2;
	}

	.home {
		margin: 0 32px 0 28px;
	}

	nav {
		display: flex;
		gap: 26px;
		font-size: 17px;
		line-height: 24px;
	}

	.menu-right {
		display: flex;
		align-items: center;
		align-self: stretch;
		margin-left: auto;
	}

	.share {
		margin: 0 27px 0 34px;
	}

	.bar {
		width: 2px;
		height: 30px;
		background: #dadada;
	}

	.workspace {
		display: flex;
		align-items: center;
		gap: 15px;
		margin: 0 19px 4px 16px;
		font-size: 16px;
	}

	.stock {
		display: flex;
		align-items: center;
		gap: 2px;
		width: 195px;
		height: 30px;
		margin: 0 24px 4px 13px;
		padding-left: 5px;
		border: 1px solid #c8c8c8;
		border-radius: 4px;
		background: #fbfbfb;
	}

	.stock input {
		width: 140px;
	}

	.stock input::placeholder {
		color: #888;
		opacity: 1;
	}

	.window-buttons {
		display: flex;
		align-self: flex-start;
		height: 28px;
		margin-right: 4px;
		border: 1px solid #bdbdbd;
		border-top: 0;
		border-radius: 0 0 4px 4px;
	}

	.window-buttons button {
		width: 41px;
		border-right: 1px solid #bdbdbd;
	}

	.window-buttons button:first-child {
		padding-top: 8px;
	}

	.window-buttons button:last-child {
		width: 70px;
		border-right: 0;
	}

	/* Control bar */
	.controls {
		display: flex;
		align-items: center;
		flex: none;
		height: 91px;
		padding: 0 0 1px 8px;
		border-left: 1px solid #d2d2d2;
		border-bottom: 1px solid #c4c4c4;
	}

	.controls > * {
		flex: none;
	}

	.vgrip {
		width: 3px;
		height: 28px;
		background: repeating-linear-gradient(#b5b5b5 0 1px, transparent 1px 3px);
	}

	.refpoint {
		margin-left: 30px;
	}

	.stack {
		display: grid;
		grid-template-rows: 32px 32px;
		gap: 7px;
		align-items: center;
	}

	.labels {
		width: 37px;
		padding-right: 7px;
		color: #111;
		font-size: 15px;
		text-align: right;
	}

	.size-labels {
		width: 40px;
		padding-right: 6px;
	}

	.field {
		display: flex;
		width: 130px;
		height: 32px;
		border: 1px solid #c6c6c6;
		border-radius: 4px;
		background: #fdfdfd;
		color: #000;
		overflow: hidden;
	}

	.field input {
		flex: 1;
		min-width: 0;
		padding-left: 7px;
	}

	.spin {
		display: flex;
		flex-direction: column;
		justify-content: space-around;
		width: 25px;
		padding: 1px 0;
		border-right: 1px solid #c6c6c6;
		background: #f1f1f1;
	}

	.spin button {
		height: 12px;
	}

	.drop {
		width: 28px;
		border-left: 1px solid #c6c6c6;
		background: #f1f1f1;
	}

	.field.disabled,
	.disabled .spin,
	.disabled .drop {
		border-color: #dadada;
		background: #dadada;
		color: #888;
	}

	.sep {
		width: 1px;
		height: 70px;
		margin: 0 8px;
		background: #d9d9d9;
	}

	.sep.wide {
		margin: 0 8px 0 11px;
	}

	.unlink {
		margin: 0 8px 0 16px;
	}

	.scale-icons {
		margin: 0 6px 0 3px;
	}

	.link-toggle {
		width: 36px;
		height: 36px;
		margin: 0 13px 0 9px;
		border: 1px solid #aaa;
		border-radius: 4px;
		background: #bdbdbd;
	}

	.angle-icons {
		margin-right: 8px;
	}

	.pairs {
		display: grid;
		grid-template: 32px 32px / auto auto;
		gap: 7px 14px;
	}

	.rotate {
		margin: 0 17px 0 5px;
	}

	.trees {
		column-gap: 17px;
		margin-left: 7px;
	}

	.paint {
		column-gap: 5px;
	}

	.more {
		width: 25px;
		border: 1px solid #c6c6c6;
		border-radius: 4px;
		background: #fbfbfb;
	}

	.effects {
		width: 131px;
		margin-left: 5px;
	}

	.effect-icons {
		display: flex;
		align-items: center;
		gap: 20px;
		padding-left: 2px;
	}

	.fx {
		color: #505050;
		font-size: 20px;
		font-style: italic;
		font-weight: 500;
		line-height: 24px;
	}

	.opacity {
		display: flex;
		align-items: center;
		gap: 8px;
	}

	.opacity .field {
		width: 105px;
	}

	.opacity .field input {
		padding-left: 5px;
	}

	.wrap {
		gap: 3px 6px;
		grid-template: 36px 36px / 35px 35px;
	}

	.wrap .on,
	.toolbox .on {
		border: 1px solid #a9a9a9;
		border-radius: 4px;
		background: #bdbdbd;
	}

	.corner-icon {
		margin: 0 6px 0 3px;
	}

	.field.corner {
		background: #fff;
	}

	.bolt {
		margin-left: auto;
		margin-right: 6px;
	}

	.bar-menu {
		justify-items: center;
		width: 18px;
		margin: 0 11px 0 5px;
	}

	/* Document window */
	main {
		display: flex;
		flex: 1;
		min-height: 0;
	}

	.document {
		display: flex;
		flex: 1;
		flex-direction: column;
		min-width: 0;
		border-left: 2px solid #a0a0a0;
		border-right: 2px solid #333;
	}

	.tabs {
		display: flex;
		flex: none;
		height: 43px;
		padding-left: 96px;
		border-bottom: 1px solid #cfcfcf;
		background: #dadada;
	}

	.tab {
		display: flex;
		align-items: center;
		gap: 22px;
		padding: 1px 24px 0 22px;
		border-right: 1px solid #cecece;
		color: #6a6a6a;
		font-size: 16px;
		font-weight: 600;
	}

	.tab:first-child {
		padding-left: 16px;
	}

	.tab.active {
		gap: 14px;
		background: #efefef;
		color: #444;
	}

	.close {
		padding-bottom: 4px;
	}

	.view {
		display: flex;
		flex: 1;
		min-height: 0;
	}

	.sheet {
		display: flex;
		flex: 1;
		flex-direction: column;
		min-width: 0;
	}

	.ruler-h,
	.ruler-v {
		background: #f5f5f5;
		font-size: 14px;
	}

	.ruler-h {
		width: 100%;
		height: 24px;
		overflow: hidden;
	}

	.lower {
		display: flex;
		flex: 1;
		min-height: 0;
	}

	.ruler-v {
		width: 24px;
		height: 100%;
	}

	.canvas {
		flex: 1;
		min-width: 0;
		height: 100%;
		border-right: 1px solid #bbb;
		background: #e6e6e6;
	}

	.vscroll {
		display: flex;
		flex-direction: column;
		align-items: center;
		width: 23px;
		padding: 3px 0 5px;
		background: #fbfbfb;
	}

	.vscroll .thumb {
		flex: 1;
		width: 21px;
		margin: 58px 0 27px;
		border-radius: 11px;
		background: #cbcbcb;
	}

	.status {
		display: flex;
		align-items: center;
		flex: none;
		height: 25px;
		padding-left: 21px;
		border-bottom: 1px solid #999;
		color: #555;
	}

	.zoom-level,
	.profile {
		display: flex;
		align-items: center;
		justify-content: space-between;
		width: 76px;
		font-size: 15px;
		line-height: 20px;
	}

	.first {
		margin: 0 19px 0 18px;
	}

	.page {
		width: 136px;
		height: 23px;
		margin: 0 20px 0 18px;
	}

	.page input {
		padding-left: 6px;
	}

	.end {
		margin: 0 25px 0 18px;
	}

	.profile {
		width: 167px;
		margin-left: 22px;
	}

	.errors {
		gap: 9px;
		margin-left: 22px;
		color: #111;
	}

	.errors :global(.chev) {
		margin-left: 22px;
	}

	.errors i {
		width: 16px;
		height: 16px;
		border-radius: 50%;
		background: #43a84a;
	}

	.hscroll {
		display: flex;
		align-items: center;
		flex: 1;
		height: 24px;
		margin-left: 7px;
		padding: 0 6px 0 8px;
		background: #fbfbfb;
	}

	.hscroll .thumb {
		flex: 1;
		height: 22px;
		margin: 0 8px 0 68px;
		border-radius: 11px;
		background: #cbcbcb;
	}

	.split {
		margin: 0 8px 0 7px;
	}

	.resize {
		margin-right: 3px;
	}

	/* Panels on the right */
	.dock {
		display: flex;
		flex: none;
		width: 309px;
		border-right: 1px solid #d2d2d2;
		border-bottom: 1px solid #aaa;
	}

	.strip {
		width: 60px;
		border-left: 2px solid #d2d2d2;
		border-right: 1px solid #8f8f8f;
	}

	.libraries {
		flex: 1;
		border-left: 2px solid #d2d2d2;
	}

	.cap {
		display: flex;
		justify-content: flex-end;
		height: 18px;
		padding-right: 8px;
		border-bottom: 1px solid #999;
		background: #dadada;
	}

	.grip {
		width: 29px;
		height: 6px;
		margin: 0 auto;
		background: repeating-linear-gradient(90deg, #b8b8b8 0 1px, transparent 1px 3px);
	}

	.panel-group {
		padding: 4px 0;
		border-bottom: 2px solid #cbcbcb;
	}

	.panel-group .grip {
		margin-bottom: 4px;
	}

	.panel-group button {
		width: 59px;
		height: 42px;
	}

	.lib-head {
		height: 61px;
		padding-top: 4px;
		border-bottom: 1px solid #cbcbcb;
	}

	.lib-head button {
		gap: 16px;
		height: 50px;
		padding-left: 18px;
		color: #444;
		font-size: 15px;
		font-weight: 700;
	}

	/* Floating tool box */
	.toolbox {
		position: absolute;
		top: 141px;
		left: 2px;
		width: 108px;
		padding-bottom: 6px;
		border: 1px solid #d0d0d0;
		border-bottom: 0;
		border-radius: 6px 6px 0 0;
		background: #efefef;
		box-shadow: 1px 0 4px #0002;
	}

	.tool-cap {
		display: flex;
		align-items: center;
		justify-content: flex-end;
		gap: 15px;
		height: 19px;
		margin-bottom: 6px;
		padding-right: 9px;
		border-bottom: 1px solid #999;
		border-radius: 6px 6px 0 0;
		background: #dadada;
	}

	.tools {
		display: grid;
		grid-template-columns: 45px 45px;
		grid-auto-rows: 36px;
		margin: 0 2px 0 4px;
		padding: 2px 0 1px 3px;
		border-bottom: 1px solid #dadada;
	}

	.grip + .tools {
		padding-top: 11px;
	}

	.view-tools {
		padding-bottom: 3px;
	}

	.mode-tools {
		border-bottom: 0;
	}

	.corner-mark {
		position: relative;
	}

	.corner-mark::after {
		content: '';
		position: absolute;
		right: 2px;
		bottom: 2px;
		width: 6px;
		height: 6px;
		background: #444;
		clip-path: polygon(100% 0, 100% 100%, 0 100%);
	}

	.colors {
		padding: 6px 0 0 12px;
	}

	.format {
		display: flex;
		gap: 6px;
		padding: 11px 0 7px 20px;
	}

	.format button {
		width: 30px;
		height: 27px;
	}

	.text-format {
		color: #a0a0a0;
		font-family: 'DejaVu Serif', serif;
		font-size: 17px;
		font-weight: 700;
	}

	.apply {
		display: flex;
		gap: 3px;
		padding: 0 0 6px 9px;
	}

	.apply button {
		width: 27px;
		height: 29px;
	}

	.apply i {
		width: 18px;
		height: 18px;
		border: 1px solid #999;
	}

	.apply .solid {
		background: #808080;
	}

	.apply .grad {
		background: linear-gradient(90deg, #fff, #777);
	}

	.apply .framed {
		border: 1px solid #aaa;
		border-radius: 4px;
		background: #e6e6e6;
	}

	/* Windows taskbar */
	.taskbar {
		display: flex;
		flex: none;
		height: 60px;
		background: linear-gradient(90deg, #43322c 0 1300px, #4a4849 1400px);
		color: #fff;
	}

	.start {
		width: 72px;
		background: #4a4849;
	}

	.search {
		display: flex;
		align-items: center;
		gap: 17px;
		width: 516px;
		padding-left: 16px;
		border: 2px solid #c2c2c2;
		background: #f1f1f1;
	}

	.search input {
		flex: 1;
		font-size: 21px;
	}

	.search input::placeholder {
		color: #333;
		opacity: 1;
	}

	.sys {
		width: 72px;
	}

	.apps {
		display: flex;
		gap: 2px;
		margin-left: 5px;
	}

	.apps button {
		position: relative;
		width: 56px;
	}

	.apps .active {
		background: #655955;
	}

	.apps .open::after {
		content: '';
		position: absolute;
		right: 6px;
		bottom: 0;
		left: 6px;
		height: 3px;
		background: #fdd486;
	}

	.apps .active::after {
		right: 0;
		left: 0;
	}

	.overflow {
		display: flex;
		flex-direction: column;
		justify-content: space-between;
		width: 26px;
		margin-left: auto;
		padding: 7px 0 5px;
		background: #f1f1f1;
	}

	.overflow button {
		height: 16px;
	}

	.tray {
		display: flex;
		align-items: center;
		background: #4a4849;
	}

	.tray button {
		width: 36px;
		height: 60px;
	}

	.tray .dropbox,
	.tray .notices {
		position: relative;
	}

	.dropbox b {
		position: absolute;
		left: 6px;
		bottom: 18px;
		width: 14px;
		border-radius: 3px;
		background: #cf1030;
		font-size: 12px;
		line-height: 14px;
	}

	.tray .pen {
		width: 46px;
	}

	.clock {
		display: flex;
		flex-direction: column;
		align-items: center;
		width: 116px;
		font-size: 17px;
		line-height: 28px;
	}

	.tray .notices {
		width: 46px;
		justify-content: flex-start;
		padding-left: 16px;
	}

	.notices b {
		position: absolute;
		left: 27px;
		bottom: 6px;
		width: 25px;
		height: 25px;
		border: 1px solid #aaa;
		border-radius: 50%;
		background: #3f3d3e;
		font-size: 15px;
		line-height: 23px;
		text-align: center;
	}

	.peek {
		align-self: stretch;
		width: 2px;
		margin: 0 5px 0 27px;
		background: #888;
	}
</style>
